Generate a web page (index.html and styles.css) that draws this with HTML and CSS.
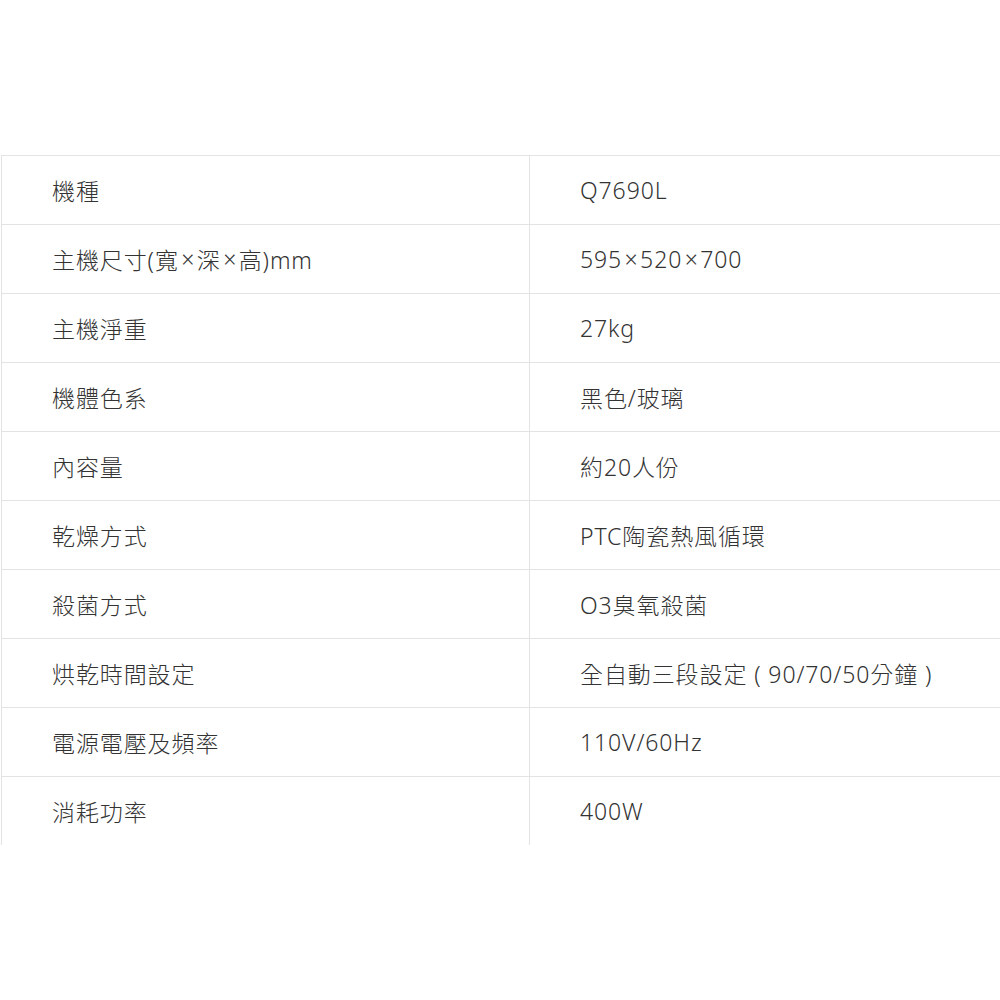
FILE: index.html
```html
<!DOCTYPE html>
<html lang="zh-Hant">
<head>
<meta charset="utf-8">
<link rel="stylesheet" href="styles.css">
</head>
<body>
<div class="spec">
  <div class="row"><div class="cell key">機種</div><div class="cell val">Q7690L</div></div>
  <div class="row"><div class="cell key">主機尺寸(寬<span class="x">×</span>深<span class="x">×</span>高)mm</div><div class="cell val">595<span class="x">×</span>520<span class="x">×</span>700</div></div>
  <div class="row"><div class="cell key">主機淨重</div><div class="cell val">27kg</div></div>
  <div class="row"><div class="cell key">機體色系</div><div class="cell val">黑色/玻璃</div></div>
  <div class="row"><div class="cell key">內容量</div><div class="cell val">約20人份</div></div>
  <div class="row"><div class="cell key">乾燥方式</div><div class="cell val">PTC陶瓷熱風循環</div></div>
  <div class="row"><div class="cell key">殺菌方式</div><div class="cell val">O3臭氧殺菌</div></div>
  <div class="row"><div class="cell key">烘乾時間設定</div><div class="cell val">全自動三段設定 ( 90/70/50分鐘 )</div></div>
  <div class="row"><div class="cell key">電源電壓及頻率</div><div class="cell val">110V/60Hz</div></div>
  <div class="row"><div class="cell key">消耗功率</div><div class="cell val">400W</div></div>
</div>
</body>
</html>
```
FILE: styles.css
```css
html, body {
  margin: 0;
  padding: 0;
  background: #fff;
}
body {
  font-family: "Noto Sans", "Noto Sans CJK TC", sans-serif;
  font-weight: 300;
  color: #333;
  font-size: 23px;
  letter-spacing: 0.9px;
}
.spec {
  margin-top: 155px;
  margin-left: 1px;
  display: flex;
  flex-direction: column;
}
.row {
  display: grid;
  grid-template-columns: 528px 1fr;
  height: 69px;
  box-sizing: border-box;
  border-top: 1px solid #e3e3e3;
}
.cell {
  display: flex;
  align-items: center;
  padding-left: 50px;
  border-left: 1px solid #e3e3e3;
  white-space: pre;
}
.x {
  display: inline-block;
  width: 18px;
  text-align: center;
  letter-spacing: 0;
}
```
